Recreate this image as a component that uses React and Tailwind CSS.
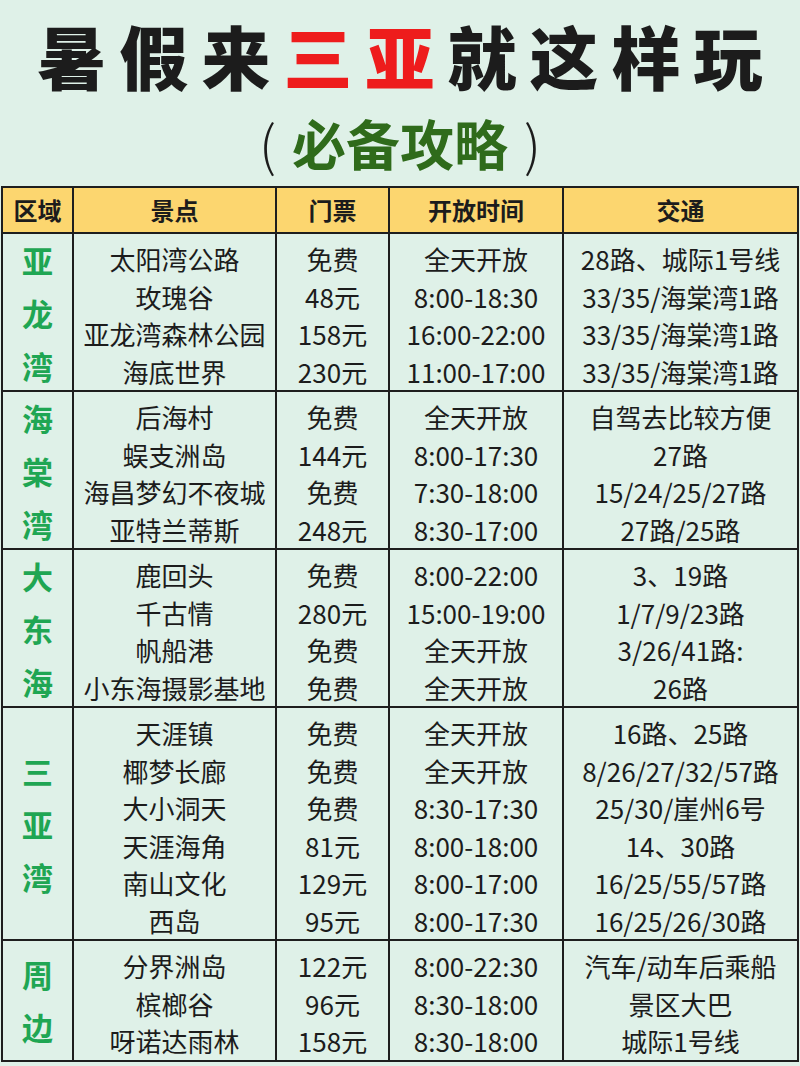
import React from 'react'

const groups = [
    {
        region: '亚龙湾',
        rows: [
            ['太阳湾公路', '免费', '全天开放', '28路、城际1号线'],
            ['玫瑰谷', '48元', '8:00-18:30', '33/35/海棠湾1路'],
            ['亚龙湾森林公园', '158元', '16:00-22:00', '33/35/海棠湾1路'],
            ['海底世界', '230元', '11:00-17:00', '33/35/海棠湾1路'],
        ],
    },
    {
        region: '海棠湾',
        rows: [
            ['后海村', '免费', '全天开放', '自驾去比较方便'],
            ['蜈支洲岛', '144元', '8:00-17:30', '27路'],
            ['海昌梦幻不夜城', '免费', '7:30-18:00', '15/24/25/27路'],
            ['亚特兰蒂斯', '248元', '8:30-17:00', '27路/25路'],
        ],
    },
    {
        region: '大东海',
        rows: [
            ['鹿回头', '免费', '8:00-22:00', '3、19路'],
            ['千古情', '280元', '15:00-19:00', '1/7/9/23路'],
            ['帆船港', '免费', '全天开放', '3/26/41路:'],
            ['小东海摄影基地', '免费', '全天开放', '26路'],
        ],
    },
    {
        region: '三亚湾',
        rows: [
            ['天涯镇', '免费', '全天开放', '16路、25路'],
            ['椰梦长廊', '免费', '全天开放', '8/26/27/32/57路'],
            ['大小洞天', '免费', '8:30-17:30', '25/30/崖州6号'],
            ['天涯海角', '81元', '8:00-18:00', '14、30路'],
            ['南山文化', '129元', '8:00-17:00', '16/25/55/57路'],
            ['西岛', '95元', '8:00-17:30', '16/25/26/30路'],
        ],
    },
    {
        region: '周边',
        rows: [
            ['分界洲岛', '122元', '8:00-22:30', '汽车/动车后乘船'],
            ['槟榔谷', '96元', '8:30-18:00', '景区大巴'],
            ['呀诺达雨林', '158元', '8:30-18:00', '城际1号线'],
        ],
    },
]

const headers = ['区域', '景点', '门票', '开放时间', '交通']
const widths = ['w-[71px]', 'w-[203px]', 'w-[113px]', 'w-[174px]', 'w-[235px]']

function App() {
    return (
        <div
            className="min-h-[1066px] bg-[#dff1e8] text-[#1c1c1c]"
            style={{ fontFamily: '"Noto Sans CJK SC", "Noto Sans", sans-serif' }}
        >
            <h1 className="pt-[10px] h-[100px] text-center text-[69px] leading-[90px] font-black tracking-[13px] pl-[13px]">
                暑假来<span className="text-[#ee1c1c]">三亚</span>就这样玩
            </h1>
            <div className="h-[86px] flex items-center justify-center text-[54px] leading-[78px] font-bold">
                <span className="font-light text-[54px] mr-[16px]">(</span>
                <span className="text-[#2f6b1b]">必备攻略</span>
                <span className="font-light text-[54px] ml-[16px]">)</span>
            </div>

            <table className="table-fixed border-collapse w-[796px] mx-auto border-2 border-[#1e1e1e]">
                <thead>
                    <tr className="bg-[#fcd66f] h-[46px]">
                        {headers.map((h, i) => (
                            <th
                                key={h}
                                className={`${widths[i]} border-2 border-[#1e1e1e] text-[24px] font-bold text-center p-0`}
                            >
                                {h}
                            </th>
                        ))}
                    </tr>
                </thead>
                <tbody>
                    {groups.map((g) => (
                        <tr key={g.region}>
                            <td className="border-2 border-[#1e1e1e] p-0 align-middle">
                                <div className="-my-[10px] flex flex-col items-center text-[#1fa653] text-[31px] font-bold leading-[53px]">
                                    {g.region.split('').map((c, i) => (
                                        <span key={i}>{c}</span>
                                    ))}
                                </div>
                            </td>
                            {[0, 1, 2, 3].map((col) => (
                                <td
                                    key={col}
                                    className="border-2 border-[#1e1e1e] pt-[6px] pb-0 px-0 text-center align-top"
                                >
                                    {g.rows.map((r, i) => (
                                        <div key={i} className="text-[26px] leading-[37.5px] h-[37.5px] whitespace-nowrap">
                                            {r[col]}
                                        </div>
                                    ))}
                                </td>
                            ))}
                        </tr>
                    ))}
                </tbody>
            </table>
        </div>
    )
}

export default App
